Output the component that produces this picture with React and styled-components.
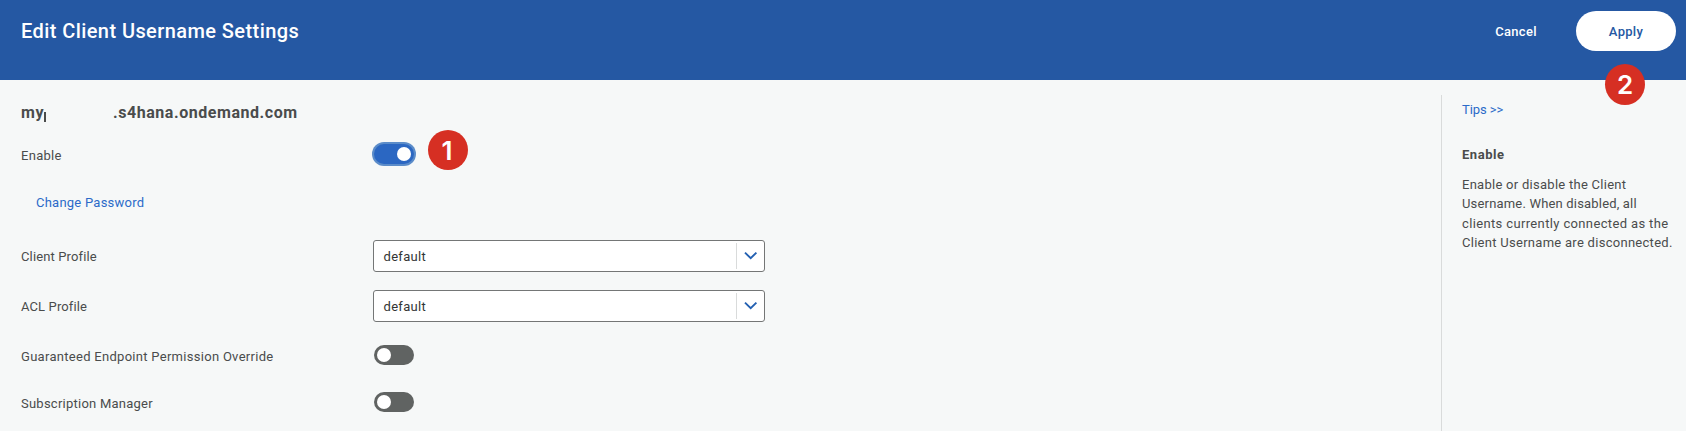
import React from "react";
import styled, { createGlobalStyle } from "styled-components";

const GlobalStyle = createGlobalStyle`
  * { box-sizing: border-box; }
  body {
    margin: 0;
    overflow: hidden;
    background: #f6f8f8;
    color: #4a4c4c;
    font: 400 13px/20px Roboto, "Liberation Sans", sans-serif;
    letter-spacing: 0.29px;
  }
`;

const Page = styled.div`
  display: flex;
  flex-direction: column;
  height: 431px;
`;

const Header = styled.header`
  flex: none;
  display: flex;
  justify-content: space-between;
  align-items: flex-start;
  height: 80px;
  padding: 11px 10px 0 21px;
  background: #2558a3;
  color: #fff;
`;

const Title = styled.h1`
  margin: 0;
  font-size: 20px;
  font-weight: 500;
  line-height: 40px;
  letter-spacing: 0.42px;
`;

const Actions = styled.div`
  position: relative;
  display: flex;
  gap: 10px;
`;

const Button = styled.button`
  width: 100px;
  height: 40px;
  padding: 2px 0 0;
  border: 0;
  border-radius: 20px;
  background: ${(p) => (p.$primary ? "#fff" : "transparent")};
  color: ${(p) => (p.$primary ? "#2558a3" : "#fff")};
  font: 500 13px/20px Roboto, "Liberation Sans", sans-serif;
  letter-spacing: 0.3px;
`;

const Body = styled.main`
  flex: 1;
  display: flex;
  min-height: 0;
`;

const Form = styled.section`
  flex: 1;
  padding: 20px 0 0 21px;
`;

const Host = styled.h2`
  display: flex;
  align-items: center;
  height: 25px;
  margin: 0 0 7px;
  font-size: 16px;
  font-weight: 700;
  line-height: 25px;
  letter-spacing: 0.55px;
`;

const HiddenPart = styled.span`
  width: 69px;
  height: 10px;
  margin: 8px 0 0;
  border-left: 2px solid #4a4c4c;
`;

const Row = styled.div`
  display: flex;
  align-items: center;
  height: ${(p) => p.$height}px;
`;

const Label = styled.label`
  width: 352px;
  padding-top: ${(p) => p.$drop || 0}px;
  letter-spacing: ${(p) => p.$spacing || 0.29}px;
`;

const LinkRow = styled.div`
  height: 55px;
  padding: 17px 0 0 15px;
`;

const Link = styled.a`
  color: #2b6bc9;
  font-weight: 450;
  letter-spacing: ${(p) => p.$spacing}px;
`;

const Track = styled.span`
  display: flex;
  align-items: center;
  justify-content: ${(p) => (p.$on ? "flex-end" : "flex-start")};
  width: 40px;
  height: 20px;
  margin-left: 1px;
  padding: 0 3px;
  border-radius: 10px;
  background: ${(p) => (p.$on ? "#2b67c2" : "#606362")};
  box-shadow: ${(p) => (p.$on ? "0 0 0 2px #5b8cc9" : "none")};
`;

const Knob = styled.span`
  width: 14px;
  height: 14px;
  border-radius: 50%;
  background: #fff;
`;

const Marker = styled.span`
  display: flex;
  align-items: center;
  justify-content: center;
  width: 40px;
  height: ${(p) => p.$height || 40}px;
  padding-top: 1px;
  border-radius: 50%;
  background: #d62f23;
  color: #fff;
  font: 600 26px/40px Inter, "Liberation Sans", sans-serif;
  letter-spacing: 0;
`;

const ToggleMarker = styled(Marker)`
  margin: -8px 0 0 14px;
  padding-right: 2px;
`;

const ApplyMarker = styled(Marker)`
  position: absolute;
  top: 53px;
  right: 31px;
`;

const SelectBox = styled.div`
  display: flex;
  align-items: center;
  width: 392px;
  height: 32px;
  padding-left: 9px;
  border: 1px solid #747676;
  border-radius: 3px;
  background: #fff;
  color: #333535;
`;

const SelectValue = styled.span`
  flex: 1;
  padding: 1px 0 0 0.5px;
  letter-spacing: 0.32px;
`;

const SelectArrow = styled.span`
  display: flex;
  align-items: center;
  justify-content: center;
  width: 28px;
  height: 26px;
  border-left: 1px solid #d9dbdb;
`;

const Tips = styled.aside`
  flex: none;
  width: 245px;
  margin-top: 15px;
  padding: 5px 0 0 20px;
  border-left: 1px solid #d9dbdb;
`;

const TipTitle = styled.h3`
  margin: 25px 0 10px;
  font-size: 13px;
  font-weight: 700;
  line-height: 20px;
  letter-spacing: 0.55px;
`;

const TipText = styled.p`
  margin: 0;
  line-height: 19.4px;
`;

const TipLine = styled.span`
  display: block;
  white-space: nowrap;
  letter-spacing: ${(p) => p.$spacing}px;
`;

function Toggle({ on }) {
  return (
    <Track $on={on} role="switch" aria-checked={!!on}>
      <Knob />
    </Track>
  );
}

function Select({ value }) {
  return (
    <SelectBox>
      <SelectValue>{value}</SelectValue>
      <SelectArrow>
        <svg width="14" height="10" viewBox="0 0 14 10" fill="none" stroke="#2360b2" strokeWidth="1.9">
          <path d="M1 1.6 6.7 7.2 12.4 1.6" />
        </svg>
      </SelectArrow>
    </SelectBox>
  );
}

export default function App() {
  return (
    <Page>
      <GlobalStyle />
      <Header>
        <Title>Edit Client Username Settings</Title>
        <Actions>
          <Button>Cancel</Button>
          <Button $primary>Apply</Button>
          <ApplyMarker $height={41}>2</ApplyMarker>
        </Actions>
      </Header>
      <Body>
        <Form>
          <Host>
            <span>my</span>
            <HiddenPart />
            <span>.s4hana.ondemand.com</span>
          </Host>
          <Row $height={44}>
            <Label $drop={3}>Enable</Label>
            <Toggle on />
            <ToggleMarker>1</ToggleMarker>
          </Row>
          <LinkRow>
            <Link $spacing={0.24}>Change Password</Link>
          </LinkRow>
          <Row $height={50}>
            <Label $drop={1} $spacing={0.13}>Client Profile</Label>
            <Select value="default" />
          </Row>
          <Row $height={50}>
            <Label $drop={1} $spacing={0.12}>ACL Profile</Label>
            <Select value="default" />
          </Row>
          <Row $height={48}>
            <Label $drop={3}>Guaranteed Endpoint Permission Override</Label>
            <Toggle />
          </Row>
          <Row $height={46}>
            <Label $drop={3} $spacing={0.24}>Subscription Manager</Label>
            <Toggle />
          </Row>
        </Form>
        <Tips>
          <Link $spacing={-0.07}>Tips &gt;&gt;</Link>
          <TipTitle>Enable</TipTitle>
          <TipText>
            <TipLine $spacing={0.27}>Enable or disable the Client</TipLine>
            <TipLine $spacing={0.18}>Username. When disabled, all</TipLine>
            <TipLine $spacing={0.36}>clients currently connected as the</TipLine>
            <TipLine $spacing={0.28}>Client Username are disconnected.</TipLine>
          </TipText>
        </Tips>
      </Body>
    </Page>
  );
}
